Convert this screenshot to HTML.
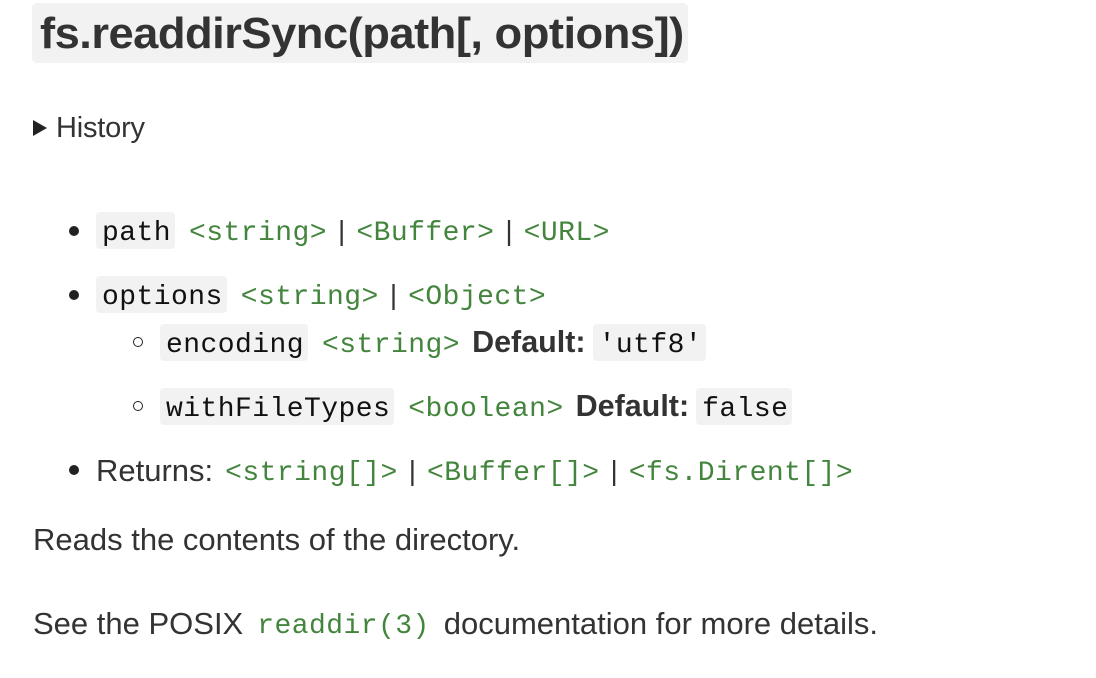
<!DOCTYPE html>
<html><head><meta charset="utf-8"><style>
body{margin:0;width:1096px;height:678px;background:#fff;color:#333;font-family:"Liberation Sans",sans-serif;position:relative;overflow:hidden}
.a{position:absolute;white-space:nowrap;display:flex;align-items:center;height:37px}
.m{font-family:"Liberation Mono",monospace;font-size:28px;letter-spacing:0.45px}
.m.g{position:relative;top:3px}
.c{background:#f2f2f2;border-radius:4px;padding:3px 4px 0 6px;height:34px;line-height:37px;color:#111}
.g{color:#43853d}
.s{font-size:31px;letter-spacing:0}
.sep{font-size:28px;margin:0 11px;color:#333}
.b{font-weight:bold;font-size:30.5px;letter-spacing:0}
.dot{position:absolute;width:10px;height:10px;border-radius:50%;background:#222}
.ring{position:absolute;width:8px;height:8px;border-radius:50%;border:1.5px solid #222}
</style></head><body>
<div style="position:absolute;left:32px;top:3px;width:656px;height:60px;background:#f2f2f2;border-radius:5px"></div>
<div style="position:absolute;left:40px;top:6px;font-size:44px;font-weight:bold;color:#333;line-height:56px;white-space:nowrap;transform-origin:left;transform:scaleX(1.03);letter-spacing:-0.5px">fs.readdirSync(path[, options])</div>
<div style="position:absolute;left:33px;top:120px;width:0;height:0;border-left:14px solid #222;border-top:8px solid transparent;border-bottom:8px solid transparent"></div>
<div style="position:absolute;left:56px;top:110px;font-size:29px;line-height:36px;letter-spacing:-0.2px">History</div>

<div class="dot" style="left:69px;top:226px"></div>
<div class="a" style="left:96px;top:212px"><span class="m c">path</span><span class="m g" style="margin-left:14px">&lt;string&gt;</span><span class="sep">|</span><span class="m g">&lt;Buffer&gt;</span><span class="sep">|</span><span class="m g">&lt;URL&gt;</span></div>

<div class="dot" style="left:69px;top:290px"></div>
<div class="a" style="left:96px;top:276px"><span class="m c">options</span><span class="m g" style="margin-left:14px">&lt;string&gt;</span><span class="sep">|</span><span class="m g">&lt;Object&gt;</span></div>

<div class="ring" style="left:133px;top:337px"></div>
<div class="a" style="left:160px;top:324px"><span class="m c">encoding</span><span class="m g" style="margin-left:14px">&lt;string&gt;</span><span class="b" style="margin:0 7px 0 12px">Default:</span><span class="m c">'utf8'</span></div>

<div class="ring" style="left:133px;top:401px"></div>
<div class="a" style="left:160px;top:388px"><span class="m c">withFileTypes</span><span class="m g" style="margin-left:14px">&lt;boolean&gt;</span><span class="b" style="margin:0 7px 0 12px">Default:</span><span class="m c">false</span></div>

<div class="dot" style="left:69px;top:465px"></div>
<div class="a" style="left:96px;top:452px"><span class="s">Returns:</span><span class="m g" style="margin-left:12px">&lt;string[]&gt;</span><span class="sep">|</span><span class="m g">&lt;Buffer[]&gt;</span><span class="sep">|</span><span class="m g">&lt;fs.Dirent[]&gt;</span></div>

<div class="a s" style="left:33px;top:521px">Reads the contents of the directory.</div>
<div class="a" style="left:33px;top:605px"><span class="s">See the POSIX</span><span class="m g" style="margin:0 14px">readdir(3)</span><span class="s">documentation for more details.</span></div>
</body></html>
